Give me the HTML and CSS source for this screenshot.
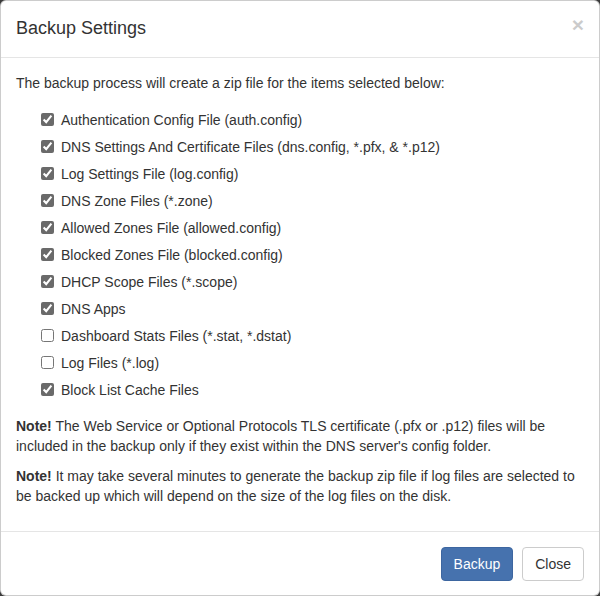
FILE: index.html
```html
<!DOCTYPE HTML>
<html>
	<head>
		<meta http-equiv="Content-Type" content="text/html; charset=UTF-8" />
		<title>Backup Settings</title>
		<link rel="stylesheet" href="styles.css">
	</head>
	<body>
		<div class="modal_content">
			<div class="modal_header">
				<button type="button" class="close">&times;</button>
				<h4 class="modal_title">Backup Settings</h4>
			</div>
			<div class="modal_body">
				<p class="intro">The backup process will create a zip file for the items selected below:</p>
				<div class="check_list">
					<label class="check"><input type="checkbox" checked>Authentication Config File (auth.config)</label>
					<label class="check"><input type="checkbox" checked>DNS Settings And Certificate Files (dns.config, *.pfx, &amp; *.p12)</label>
					<label class="check"><input type="checkbox" checked>Log Settings File (log.config)</label>
					<label class="check"><input type="checkbox" checked>DNS Zone Files (*.zone)</label>
					<label class="check"><input type="checkbox" checked>Allowed Zones File (allowed.config)</label>
					<label class="check"><input type="checkbox" checked>Blocked Zones File (blocked.config)</label>
					<label class="check"><input type="checkbox" checked>DHCP Scope Files (*.scope)</label>
					<label class="check"><input type="checkbox" checked>DNS Apps</label>
					<label class="check"><input type="checkbox">Dashboard Stats Files (*.stat, *.dstat)</label>
					<label class="check"><input type="checkbox">Log Files (*.log)</label>
					<label class="check"><input type="checkbox" checked>Block List Cache Files</label>
				</div>
				<p class="note"><b>Note!</b> The Web Service or Optional Protocols TLS certificate (.pfx or .p12) files will be included in the backup only if they exist within the DNS server's config folder.</p>
				<p class="note"><b>Note!</b> It may take several minutes to generate the backup zip file if log files are selected to be backed up which will depend on the size of the log files on the disk.</p>
			</div>
			<div class="modal_footer">
				<button type="button" class="btn btn_primary">Backup</button>
				<button type="button" class="btn btn_default">Close</button>
			</div>
		</div>
	</body>
</html>
```

FILE: styles.css
```css
body {
	margin: 0;
	background: #3b3b3b;
	font-family: "Liberation Sans", Arial, Helvetica, sans-serif;
	font-size: 14px;
	line-height: 20px;
	color: #333;
}
.modal_content {
	width: 600px;
	height: 596px;
	box-sizing: border-box;
	background: #fff;
	border: 1px solid rgba(0,0,0,.2);
	border-radius: 6px;
	overflow: hidden;
}
.modal_header {
	padding: 15px;
	border-bottom: 1px solid #e5e5e5;
}
.modal_title {
	margin: 0;
	font-size: 18px;
	font-weight: normal;
	line-height: 25.7px;
}
.close {
	float: right;
	margin-top: -2px;
	padding: 0;
	border: 0;
	background: transparent;
	font-family: "Liberation Sans", Arial, sans-serif;
	font-size: 21px;
	font-weight: bold;
	line-height: 1;
	color: #000;
	opacity: .2;
}
.modal_body {
	padding: 15px;
}
.intro {
	margin: 0 0 17px;
}
.check_list {
	display: flex;
	flex-direction: column;
	gap: 7px;
	padding-left: 25px;
	margin-bottom: 16px;
}
.check {
	display: flex;
	align-items: center;
	height: 20px;
}
.check input {
	width: 13px;
	height: 13px;
	margin: 0 7px 0 0;
	accent-color: #6a6a6a;
}
.note {
	margin: 0 0 10px;
}
.modal_footer {
	padding: 15px;
	text-align: right;
	border-top: 1px solid #e5e5e5;
}
.btn {
	display: inline-block;
	height: 34px;
	padding: 6px 12px;
	font-family: "Liberation Sans", Arial, sans-serif;
	font-size: 14px;
	line-height: 20px;
	border: 1px solid transparent;
	border-radius: 4px;
	box-sizing: border-box;
}
.btn + .btn {
	margin-left: 5px;
}
.btn_primary {
	color: #fff;
	background: #4672ae;
	border-color: #3d66a0;
}
.btn_default {
	color: #333;
	background: #fff;
	border-color: #ccc;
}
```
